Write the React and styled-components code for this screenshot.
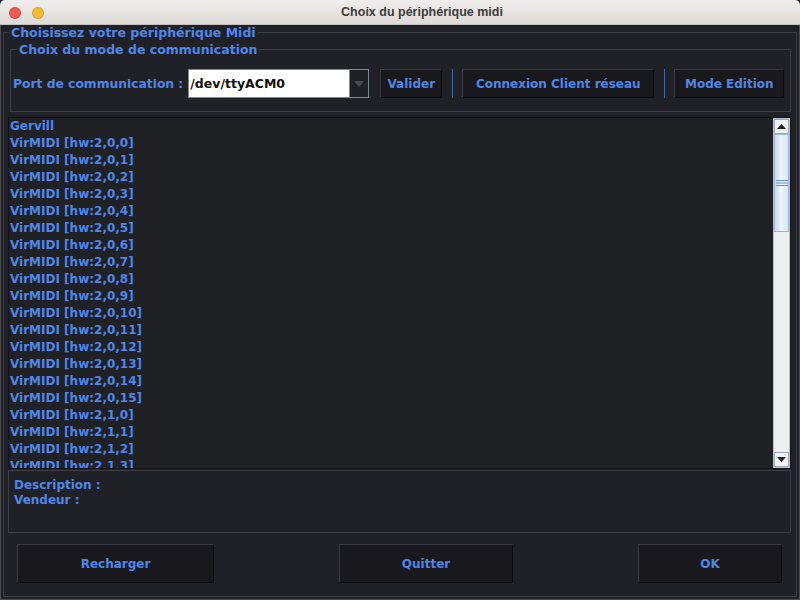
import React from 'react';
import styled, { createGlobalStyle } from 'styled-components';

const GlobalStyle = createGlobalStyle`
  html, body {
    margin: 0;
    padding: 0;
    background: #202126;
  }
`;

const blue = '#4f86ea';

const Window = styled.div`
  width: 800px;
  height: 600px;
  display: flex;
  flex-direction: column;
  font-family: "DejaVu Sans", sans-serif;
  font-weight: bold;
  font-size: 12px;
  color: ${blue};
  overflow: hidden;
`;

const TitleBar = styled.div`
  height: 25px;
  flex: none;
  display: flex;
  align-items: center;
  position: relative;
  background: linear-gradient(#f0eeec, #dedad6);
  border-radius: 5px 5px 0 0;
  box-sizing: border-box;
  border-bottom: 1px solid #c4c0bb;
`;

const Dot = styled.span`
  position: absolute;
  top: 7px;
  left: ${(p) => p.$left}px;
  width: 12px;
  height: 12px;
  border-radius: 50%;
  background: ${(p) => p.$color};
  box-shadow: inset 0 0 0 1px rgba(0, 0, 0, 0.12);
`;

const Title = styled.div`
  flex: 1;
  text-align: center;
  padding-left: 44px;
  font-family: "Liberation Sans", sans-serif;
  font-weight: bold;
  font-size: 12.5px;
  color: #3c3c3c;
`;

const Frame = styled.div`
  flex: 1;
  display: flex;
  flex-direction: column;
  background: #202126;
  border-left: 1px solid #4a4a50;
  border-right: 1px solid #4a4a50;
  border-bottom: 1px solid #4a4a50;
  padding: 0 2px 2px 2px;
`;

const Group = styled.fieldset`
  margin: ${(p) => p.$margin || '0'};
  padding: ${(p) => p.$padding || '0'};
  border: 1px solid #3d3e45;
  border-radius: 0;
  min-width: 0;
  display: flex;
  flex-direction: column;
  flex: ${(p) => (p.$grow ? 1 : 'none')};
`;

const Legend = styled.legend`
  padding: 0 2px;
  margin-left: ${(p) => p.$offset}px;
  line-height: 15px;
  font-size: ${(p) => p.$size || 12}px;
`;

const PortRow = styled.div`
  display: flex;
  align-items: center;
  height: 29px;
`;

const Label = styled.span`
  margin-right: 5px;
  font-size: 12.3px;
  white-space: nowrap;
`;

const Combo = styled.div`
  display: flex;
  width: 181px;
  height: 29px;
  box-sizing: border-box;
  border: 1px solid #7c8a96;
  margin-right: 11px;
`;

const ComboField = styled.div`
  flex: 1;
  background: #ffffff;
  color: #111111;
  font-size: 12.5px;
  display: flex;
  align-items: center;
  padding-left: 1px;
  border-right: 1px solid #7c8a96;
`;

const ComboArrow = styled.div`
  width: 18px;
  background: #202126;
  display: flex;
  align-items: center;
  justify-content: center;
`;

const Button = styled.button`
  font: inherit;
  color: ${blue};
  background: #19191d;
  border: 1px solid;
  border-color: #3a3b42 #0c0c0e #0c0c0e #3a3b42;
  height: ${(p) => p.$height || 29}px;
  width: ${(p) => p.$width}px;
  padding: 0;
  flex: none;
  cursor: pointer;
`;

const Separator = styled.div`
  width: 1px;
  height: 29px;
  background: #46679e;
  margin: 0 9px 0 10px;
`;

const ListBox = styled.div`
  margin: 5px 0 0 4px;
  width: 783px;
  height: 352px;
  box-sizing: border-box;
  border: 1px solid #141417;
  display: flex;
  background: #202125;
`;

const Items = styled.div`
  flex: 1;
  overflow: hidden;
  padding-left: 1px;
`;

const Item = styled.div`
  height: 17px;
  line-height: 17px;
  white-space: nowrap;
`;

const ScrollBar = styled.div`
  width: 17px;
  display: flex;
  flex-direction: column;
  background: #eeeeee;
  border: 1px solid #b8c4d4;
  box-sizing: border-box;
`;

const ArrowButton = styled.div`
  height: 15px;
  flex: none;
  display: flex;
  align-items: center;
  justify-content: center;
  background: #f2f2f2;
  border: 1px solid #9aa8ba;
  box-sizing: border-box;
`;

const Track = styled.div`
  flex: 1;
  display: flex;
  flex-direction: column;
`;

const Thumb = styled.div`
  height: 98px;
  box-sizing: border-box;
  border: 1px solid #9db4d6;
  background: linear-gradient(90deg, #c8daf0, #eef4fb 45%, #dbe7f5);
  display: flex;
  align-items: center;
  justify-content: center;
`;

const InfoPanel = styled.div`
  margin: 1px 0 0 4px;
  width: 783px;
  height: 63px;
  box-sizing: border-box;
  border: 1px solid #3d3e45;
  padding: 7px 0 0 5px;
  line-height: 15px;
`;

const Footer = styled.div`
  display: flex;
  gap: 125px;
  margin-top: 11px;
  padding-left: 13px;
`;

const Triangle = ({ down }) => (
  <svg width="9" height="5" viewBox="0 0 9 5">
    <path d={down ? 'M0 0 H9 L4.5 5 Z' : 'M0 5 H9 L4.5 0 Z'} fill="#222" />
  </svg>
);

const devices = ['Gervill'];
for (let i = 0; i < 16; i++) devices.push(`VirMIDI [hw:2,0,${i}]`);
for (let i = 0; i < 4; i++) devices.push(`VirMIDI [hw:2,1,${i}]`);

export default function App() {
  return (
    <Window>
      <GlobalStyle />
      <TitleBar>
        <Dot $left={9} $color="#ec5a52" />
        <Dot $left={32} $color="#f5bd34" />
        <Title>Choix du périphérique midi</Title>
      </TitleBar>
      <Frame>
        <Group $grow $padding="0 5px 0 0">
          <Legend $offset={5} $size={12.5}>Choisissez votre périphérique Midi</Legend>
          <Group $margin="2px 0 0 6px" $padding="12px 0 13px 2px">
            <Legend $offset={4} $size={12.5}>Choix du mode de communication</Legend>
            <PortRow>
              <Label>Port de communication :</Label>
              <Combo>
                <ComboField>/dev/ttyACM0</ComboField>
                <ComboArrow>
                  <svg width="10" height="6" viewBox="0 0 10 6">
                    <path d="M0 0 H10 L5 6 Z" fill="#4a4b52" />
                  </svg>
                </ComboArrow>
              </Combo>
              <Button $width={62}>Valider</Button>
              <Separator />
              <Button $width={192}>Connexion Client réseau</Button>
              <Separator />
              <Button $width={110}>Mode Edition</Button>
            </PortRow>
          </Group>
          <ListBox>
            <Items>
              {devices.map((d) => (
                <Item key={d}>{d}</Item>
              ))}
            </Items>
            <ScrollBar>
              <ArrowButton>
                <Triangle />
              </ArrowButton>
              <Track>
                <Thumb>
                  <svg width="12" height="6" viewBox="0 0 12 6">
                    <path d="M0 0.5 H12 M0 3 H12 M0 5.5 H12" stroke="#6a8fd0" strokeWidth="1" />
                  </svg>
                </Thumb>
              </Track>
              <ArrowButton>
                <Triangle down />
              </ArrowButton>
            </ScrollBar>
          </ListBox>
          <InfoPanel>
            <div>Description :</div>
            <div>Vendeur :</div>
          </InfoPanel>
          <Footer>
            <Button $width={197} $height={39}>Recharger</Button>
            <Button $width={174} $height={39}>Quitter</Button>
            <Button $width={144} $height={39}>OK</Button>
          </Footer>
        </Group>
      </Frame>
    </Window>
  );
}
